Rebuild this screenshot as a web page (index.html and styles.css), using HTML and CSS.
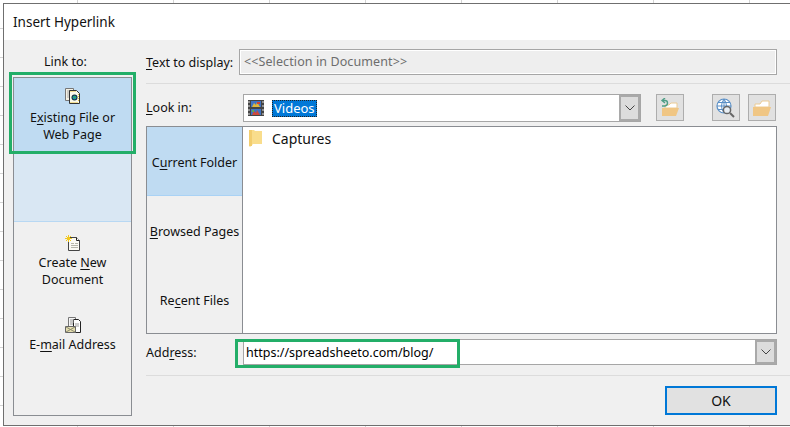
FILE: index.html
```html
<!DOCTYPE HTML>
<html>
<head>
	<title>Insert Hyperlink</title>
	<link rel="stylesheet" href="styles.css">
</head>
<body>
	<div class="dialog">
		<div class="titlebar">Insert Hyperlink</div>
		<div class="content">
			<div class="link-col">
				<div class="link-label">Link to:</div>
				<div class="link-list">
					<div class="link-item item-existing">
						<svg class="doc-icon" viewBox="0 0 16 16" width="16" height="16">
							<path d="M.5 .5h8v12h-8z" fill="#f4f1e4" stroke="#777"/>
							<path d="M2 3h5M2 5h2M2 7h2M2 9h2" stroke="#aaa"/>
							<path d="M4.500 2.500h7l3 3v10h-10z" fill="#fbf9ea" stroke="#333"/>
							<path d="M5.500 3.500h5M5.500 14.500h8M13.500 6v8" stroke="#e6c33c" stroke-dasharray="1 1"/>
							<circle cx="9.500" cy="9.500" r="3" fill="#16303a"/>
							<circle cx="9.500" cy="9.500" r="2" fill="#1f8fb0"/>
							<path d="M8.500 8.500h2v1.500h-2z" fill="#3bb54a"/>
						</svg>
						<span>E<u>x</u>isting File or<br>Web Page</span>
					</div>
					<div class="link-spacer"></div>
					<div class="link-item item-new">
						<svg class="doc-icon" viewBox="0 0 16 16" width="16" height="16">
							<path d="M3.500 2.500h8l3 3v10h-11z" fill="#fbfaf2" stroke="#444"/>
							<path d="M11.500 2.500v3h3" fill="#fff" stroke="#222"/>
							<path d="M6 8.500h3M10 8.500h3M6 10.500h7M6 12.500h7" stroke="#b5b5a8"/>
							<path d="M3.500 0v7M0 3.500h7M1 1l5 5M6 1L1 6" stroke="#f2c81e"/>
						</svg>
						<span>Create <u>N</u>ew<br>Document</span>
					</div>
					<div class="link-item item-mail">
						<svg class="doc-icon" viewBox="0 0 16 16" width="16" height="16">
							<path d="M3.500 .5h7v9h-7z" fill="#f5f5f5" stroke="#777"/>
							<path d="M8.500 2.500h5l2 2v11h-7z" fill="#fff" stroke="#222"/>
							<path d="M5 3h4M5 5h4M5 7h3M10 7h4M10 9h4" stroke="#999"/>
							<path d="M.5 9.500h10v6H.5z" fill="#e6dfb0" stroke="#666"/>
							<path d="M1 10l9 5M10 10l-9 5" stroke="#8a8a70"/>
						</svg>
						<span>E-<u>m</u>ail Address</span>
					</div>
				</div>
			</div>
			<div class="main-col">
				<div class="row row-display">
					<label class="row-label"><u>T</u>ext to display:</label>
					<div class="display-box">&lt;&lt;Selection in Document&gt;&gt;</div>
				</div>
				<div class="rule rule-top"></div>
				<div class="row row-lookin">
					<label class="row-label look-label"><u>L</u>ook in:</label>
					<div class="combo">
						<svg class="film-icon" viewBox="0 0 16 16" width="16" height="16">
							<rect width="16" height="16" fill="#444"/>
							<path d="M1 1v14M15 1v14" stroke="#ddd" stroke-dasharray="2 2"/>
							<rect x="3" y="1" width="10" height="6" fill="#3f73c4"/>
							<rect x="3" y="9" width="10" height="6" fill="#3f73c4"/>
							<path d="M4 7l2-4 2 2 1-3 3 5z" fill="#e0b83a"/>
							<path d="M4 15l2-4 2 2 1-3 3 5z" fill="#d04a3a"/>
							<rect x="9" y="2" width="3" height="2" fill="#d2432f"/>
							<rect x="4" y="10" width="2" height="2" fill="#5fae4e"/>
						</svg>
						<span class="combo-value">Videos</span>
						<div class="combo-btn">
							<svg viewBox="0 0 10 6" width="10" height="6"><path d="M.5 .5L5 5 9.500 .5" fill="none" stroke="#444"/></svg>
						</div>
					</div>
					<div class="tool-btn tool-back">
						<svg viewBox="0 0 20 20" width="20" height="20">
							<path d="M5 7h4l2-2h6v5H5z" fill="#fff" stroke="#eccb94"/>
							<path d="M2 10h17l-3 8H2z" fill="#f0c684"/>
							<path d="M5 0L2 2.500 5 5M2.500 2.500h2.500q2.500 0 2.500 2.500T5 8H2" fill="none" stroke="#4f9e86" stroke-width="1.400"/>
						</svg>
					</div>
					<div class="tool-btn tool-web">
						<svg viewBox="0 0 20 20" width="20" height="20">
							<circle cx="8" cy="8" r="7" fill="#fff" stroke="#5a8fc6" stroke-width="1.200"/>
							<path d="M1 8h14M2 4.500h12M2 11.500h12M8 1v14M8 1Q3 8 8 15M8 1q5 7 0 14" fill="none" stroke="#5a8fc6"/>
							<circle cx="11" cy="12" r="3.600" fill="#e8eef4" stroke="#666" stroke-width="1.500"/>
							<path d="M14 15l4 4" stroke="#666" stroke-width="2"/>
						</svg>
					</div>
					<div class="tool-btn tool-folder">
						<svg viewBox="0 0 20 20" width="20" height="20">
							<path d="M3 6h5l2-3h7v6H3z" fill="#fff" stroke="#eccb94"/>
							<path d="M1 9h18l-3 9H1z" fill="#f0c684"/>
						</svg>
					</div>
				</div>
				<div class="browser">
					<div class="places">
						<div class="place place-on">C<u>u</u>rrent Folder</div>
						<div class="place"><u>B</u>rowsed Pages</div>
						<div class="place">Re<u>c</u>ent Files</div>
					</div>
					<div class="files">
						<div class="file-row">
							<svg viewBox="0 0 13 18" width="13" height="18"><path d="M0 1h5l1 1h7v13H4l-3 3-1-1z" fill="#f9dd8c"/><path d="M0 1h3v16H0z" fill="#f2cd6e"/></svg>
							<span>Captures</span>
						</div>
					</div>
				</div>
				<div class="row row-address">
					<label class="row-label addr-label">Add<u>r</u>ess:</label>
					<div class="addr-box">
						<span class="addr-value">https://spreadsheeto.com/blog/</span>
						<div class="combo-btn">
							<svg viewBox="0 0 10 6" width="10" height="6"><path d="M.5 .5L5 5 9.500 .5" fill="none" stroke="#444"/></svg>
						</div>
					</div>
				</div>
				<div class="rule rule-bottom"></div>
				<div class="actions">
					<div class="ok-btn">OK</div>
				</div>
			</div>
		</div>
	</div>
	<div class="mark mark-existing"></div>
	<div class="mark mark-address"></div>
</body>
</html>
```

FILE: styles.css
```css
html, body {
	margin: 0;
	padding: 0;
}

body {
	width: 790px;
	height: 427px;
	overflow: hidden;
	position: relative;
	background-color: #fff;
	background-image:
		repeating-linear-gradient(90deg, transparent 0 77px, #d4d4d4 77px 78px, transparent 78px 96px),
		repeating-linear-gradient(180deg, transparent 0 28px, #d4d4d4 28px 29px);
	font-family: "Noto Sans", sans-serif;
	font-size: 12.5px;
	color: #111;
}

* {
	box-sizing: border-box;
}

u {
	text-underline-offset: 2px;
}

.dialog {
	margin: 3px 0 0 3px;
	width: 787px;
	height: 423px;
	border: solid #6f6f6f;
	border-width: 1px 0 1px 1px;
	background-color: #f0f0f0;
	display: flex;
	flex-direction: column;
}

.titlebar {
	height: 36px;
	flex: none;
	background-color: #fff;
	padding: 9px 0 0 9px;
	line-height: 18px;
	font-size: 13.5px;
}

.content {
	flex: 1;
	display: flex;
}

/* left side */
.link-col {
	width: 142px;
	flex: none;
	padding-left: 9px;
}

.link-label {
	width: 105px;
	height: 37px;
	padding-top: 13px;
	line-height: 18px;
	text-align: center;
}

.link-list {
	width: 119px;
	height: 339px;
	border: 1px solid #8a8d92;
	text-align: center;
	line-height: 17px;
}

.link-item {
	display: flex;
	flex-direction: column;
	align-items: center;
	white-space: nowrap;
}

.doc-icon {
	display: block;
}

.item-existing {
	height: 76px;
	background-color: #bfdbf2;
	padding-top: 10px;
	gap: 5px;
}

.link-spacer {
	height: 68px;
	background-color: #d9e7f3;
	border-bottom: 1px solid #b8d8f3;
}

.item-new {
	padding-top: 13px;
	gap: 3px;
}

.item-mail {
	padding-top: 29px;
	gap: 3px;
}

/* right side */
.main-col {
	flex: 1;
	padding-top: 9px;
}

.row {
	display: flex;
	align-items: center;
}

.row-label {
	flex: none;
	white-space: nowrap;
}

.row-display {
	height: 26px;
}

.row-display .row-label {
	width: 93px;
}

.display-box {
	width: 538px;
	height: 26px;
	border: 1px solid #a6a6a6;
	outline: 1px solid #fff;
	outline-offset: -2px;
	background-color: #eeeeee;
	color: #6d6d6d;
	padding-left: 4px;
	line-height: 23px;
	letter-spacing: .1px;
}

.rule {
	height: 1px;
	background-color: #dcdcdc;
}

.rule-top {
	margin-top: 8px;
}

.row-lookin {
	margin-top: 10px;
	height: 28px;
	align-items: flex-start;
}

.look-label {
	width: 97px;
	padding-top: 5px;
}

.combo {
	width: 398px;
	height: 28px;
	border: 1px solid #a6a6a6;
	background-color: #fff;
	display: flex;
	align-items: center;
	padding-left: 4px;
}

.film-icon {
	flex: none;
}

.combo-value {
	margin-left: 8px;
	background-color: #0078d7;
	color: #fff;
	padding: 0 2px;
	line-height: 17px;
	font-size: 13px;
	outline: 1px dotted #222;
	outline-offset: -1px;
}

.combo-btn {
	margin-left: auto;
	width: 21px;
	height: 100%;
	flex: none;
	background-color: #dcdcdc;
	border: 2px solid #a9a9a9;
	display: flex;
	align-items: center;
	justify-content: center;
}

.tool-btn {
	width: 28px;
	height: 27px;
	flex: none;
	background-color: #e1e1e1;
	border: 1px solid #adadad;
	display: flex;
	align-items: center;
	justify-content: center;
}

.tool-back {
	margin-left: 15px;
}

.tool-web {
	margin-left: 28px;
}

.tool-folder {
	margin-left: 8px;
}

.browser {
	margin-top: 4px;
	width: 631px;
	height: 208px;
	display: flex;
	border: 1px solid #8a8d92;
}

.places {
	width: 96px;
	flex: none;
	border-right: 1px solid #8a8d92;
}

.place {
	height: 69px;
	padding-top: 2px;
	display: flex;
	align-items: center;
	justify-content: center;
	white-space: nowrap;
}

.place-on {
	background-color: #bfdbf2;
	border-bottom: 1px solid #a9d2f5;
}

.files {
	flex: 1;
	background-color: #fff;
}

.file-row {
	display: flex;
	align-items: center;
	height: 22px;
	padding-left: 6px;
	font-size: 14px;
	gap: 10px;
}

.row-address {
	margin-top: 5px;
	height: 26px;
}

.addr-label {
	width: 97px;
}

.addr-box {
	width: 534px;
	height: 26px;
	border: 1px solid #a6a6a6;
	background-color: #fff;
	display: flex;
	align-items: center;
	padding-left: 2px;
}

.addr-value {
	color: #000;
}

.rule-bottom {
	margin-top: 10px;
}

.actions {
	display: flex;
	padding: 10px 13px 0 0;
	justify-content: flex-end;
}

.ok-btn {
	width: 112px;
	height: 29px;
	border: 2px solid #0078d7;
	background-color: #e1e1e1;
	text-align: center;
	line-height: 25px;
	font-size: 14px;
}

/* green annotation boxes drawn over the dialog */
.mark {
	position: absolute;
	border: 3px solid #23ae68;
}

.mark-existing {
	left: 9px;
	top: 72px;
	width: 127px;
	height: 82px;
}

.mark-address {
	left: 235px;
	top: 339px;
	width: 225px;
	height: 29px;
}
```
